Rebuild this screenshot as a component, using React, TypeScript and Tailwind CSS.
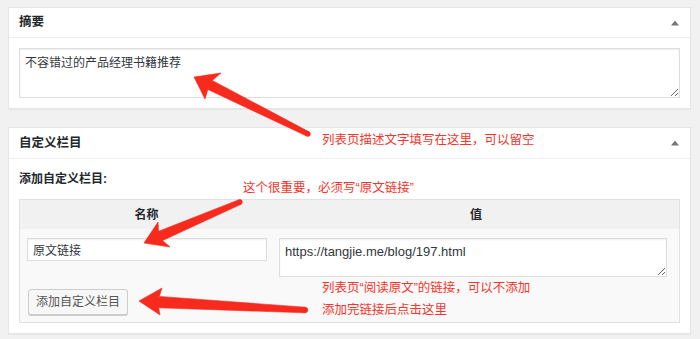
import React from "react";

const font = { fontFamily: '"Liberation Sans", "Noto Sans CJK SC", sans-serif' };

function Toggle() {
  return (
    <svg width="10" height="8" viewBox="0 0 10 8" className="block">
      <polygon points="5,1.5 9,6.5 1,6.5" fill="#72777c" />
    </svg>
  );
}

export default function App() {
  return (
    <div
      className="relative w-[700px] h-[339px] overflow-hidden bg-[#f1f1f1] pt-[7px] pl-[8px] pr-[9px] text-[#23282d]"
      style={font}
    >
      {/* Panel 1 */}
      <div className="border border-[#e5e5e5] bg-white shadow-[0_1px_1px_rgba(0,0,0,0.04)]">
        <div className="h-[30px] border-b border-[#eee] flex items-center justify-between pl-[10px] pr-[10px]">
          <span className="text-[12.5px] font-bold">摘要</span>
          <Toggle />
        </div>
        <div className="px-[10px] pt-[10px] pb-[10px]">
          <textarea
            className="block w-full h-[50px] border border-[#ddd] shadow-[inset_0_1px_2px_rgba(0,0,0,0.07)] px-[5px] pt-[5px] pb-[3px] text-[12px] leading-[18px] text-[#32373c] outline-none resize-y"
            style={font}
            defaultValue="不容错过的产品经理书籍推荐"
          />
        </div>
      </div>

      {/* Panel 2 */}
      <div className="mt-[18px] border border-[#e5e5e5] bg-white shadow-[0_1px_1px_rgba(0,0,0,0.04)]">
        <div className="h-[31px] border-b border-[#eee] flex items-center justify-between pl-[10px] pr-[10px]">
          <span className="text-[12.5px] font-bold">自定义栏目</span>
          <Toggle />
        </div>
        <div className="px-[10px] pt-[12px] pb-[10px]">
          <div className="text-[12px] font-bold leading-[16px]">添加自定义栏目:</div>
          <div className="mt-[12px] border border-[#e1e1e1] bg-[#f9f9f9]">
            <div className="grid grid-cols-[253px_1fr] h-[29px] bg-[#f1f1f1] items-center text-[12px] font-bold">
              <div className="text-center">名称</div>
              <div className="text-center">值</div>
            </div>
            <div className="grid grid-cols-[253px_1fr] pt-[9px]">
              <div className="pl-[7px] pr-[6px]">
                <input
                  className="block w-[240px] h-[23px] border border-[#ddd] bg-white px-[5px] text-[12px] text-[#32373c] shadow-[inset_0_1px_2px_rgba(0,0,0,0.07)] outline-none"
                  style={font}
                  defaultValue="原文链接"
                />
              </div>
              <div className="pl-[6px] pr-[12px]">
                <textarea
                  className="block w-full h-[39px] border border-[#ddd] bg-white px-[5px] pt-[4px] pb-[3px] text-[13px] leading-[17px] text-[#32373c] shadow-[inset_0_1px_2px_rgba(0,0,0,0.07)] outline-none resize-y"
                  style={font}
                  defaultValue="https://tangjie.me/blog/197.html"
                />
              </div>
            </div>
            <div className="pl-[8px] pt-[12px] pb-[7px]">
              <button
                className="h-[26px] w-[100px] border border-[#ccc] bg-[#f7f7f7] rounded-[3px] shadow-[0_1px_0_#ccc] text-[12px] text-[#555]"
                style={font}
              >
                添加自定义栏目
              </button>
            </div>
          </div>
        </div>
      </div>

      {/* Annotations */}
      <div className="absolute left-[322px] top-[131px] text-[12.5px] leading-[18px] text-[#f5352b]">
        列表页描述文字填写在这里，可以留空
      </div>
      <div className="absolute left-[243px] top-[179px] text-[12.5px] leading-[18px] text-[#f5352b]">
        这个很重要，必须写“原文链接”
      </div>
      <div className="absolute left-[322px] top-[279px] text-[12.5px] leading-[18px] text-[#f5352b]">
        列表页“阅读原文”的链接，可以不添加
      </div>
      <div className="absolute left-[322px] top-[301px] text-[12.5px] leading-[18px] text-[#f5352b]">
        添加完链接后点击这里
      </div>

      <svg className="absolute left-0 top-0 pointer-events-none" width="700" height="339" viewBox="0 0 700 339">
        <g fill="#f72a1e" stroke="#f72a1e" strokeWidth="0.6" strokeLinejoin="round">
          <polygon points="194,77 221,73 212.3,80.5 309,131.8 307,136.2 207.9,89.5 205,99" />
          <circle cx="308" cy="134" r="2.4" />
          <polygon points="144,243 158,222 158.6,231.3 239,199.7 241,204.3 162.6,240.5 170,247" />
          <circle cx="240" cy="202" r="2.4" />
          <polygon points="139,301 162,288 159.3,296.4 305.2,307.2 304.8,312.8 158.7,307.8 160,315" />
          <circle cx="305" cy="310" r="2.8" />
        </g>
      </svg>
    </div>
  );
}
